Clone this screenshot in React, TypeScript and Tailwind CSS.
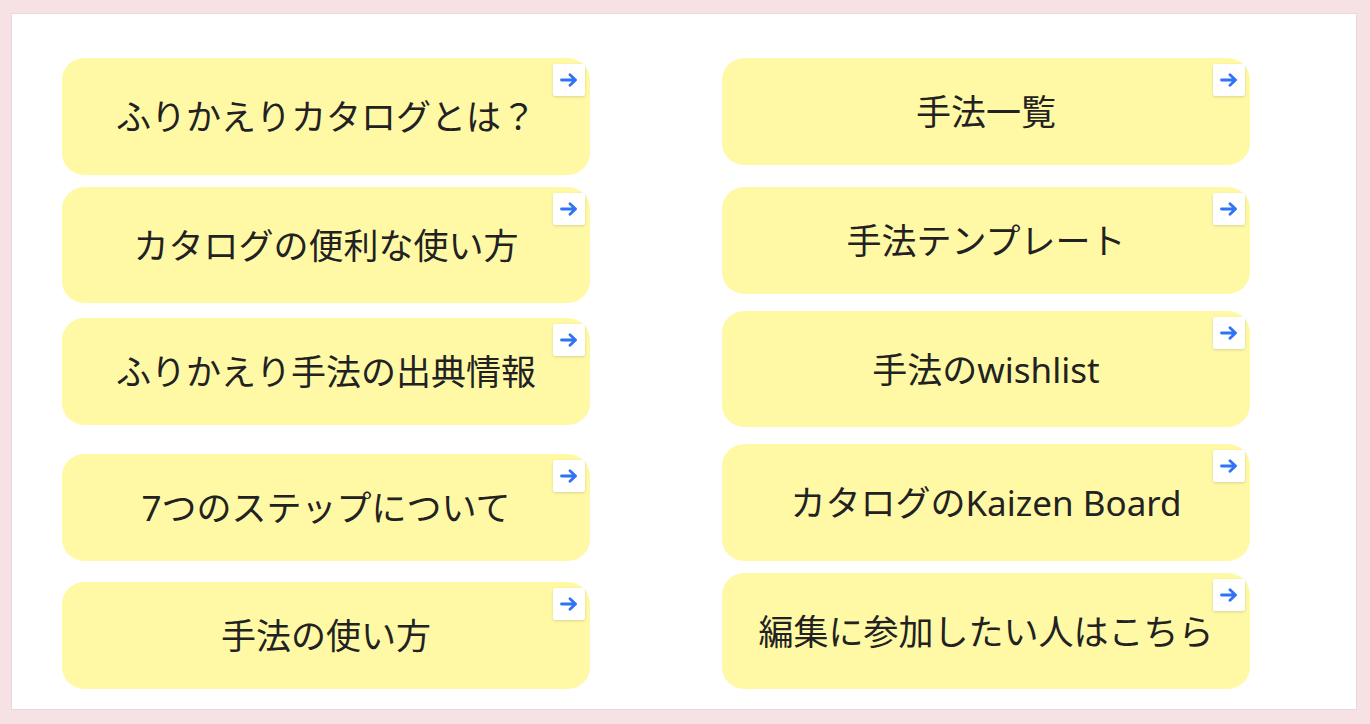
const leftCards = [
  { title: 'ふりかえりカタログとは？', h: 'h-[117px]', mt: 'mt-0' },
  { title: 'カタログの便利な使い方', h: 'h-[116px]', mt: 'mt-[12px]' },
  { title: 'ふりかえり手法の出典情報', h: 'h-[107px]', mt: 'mt-[15px]' },
  { title: '7つのステップについて', h: 'h-[107px]', mt: 'mt-[29px]' },
  { title: '手法の使い方', h: 'h-[107px]', mt: 'mt-[21px]' },
];

const rightCards = [
  { title: '手法一覧', h: 'h-[107px]', mt: 'mt-0' },
  { title: '手法テンプレート', h: 'h-[107px]', mt: 'mt-[22px]' },
  { title: '手法のwishlist', h: 'h-[116px]', mt: 'mt-[17px]' },
  { title: 'カタログのKaizen Board', h: 'h-[117px]', mt: 'mt-[17px]' },
  { title: '編集に参加したい人はこちら', h: 'h-[116px]', mt: 'mt-[12px]' },
];

type Card = { title: string; h: string; mt: string };

const LinkBadge = () => (
  <div className="absolute top-[6px] right-[5px] w-[32px] h-[32px] bg-white rounded-[2px] shadow-[0_1px_3px_rgba(0,0,0,0.15)] flex items-center justify-center">
    <svg width="18" height="14" viewBox="0 0 18 14" fill="none">
      <path d="M1.5 7H15.5M10 1.8L15.5 7L10 12.2" stroke="#2f73f6" strokeWidth="2.8" strokeLinecap="round" strokeLinejoin="round" />
    </svg>
  </div>
);

const Sticky = ({ card }: { card: Card }) => (
  <div className={`relative w-[528px] ${card.h} ${card.mt} bg-[#fff9a6] rounded-[22px] flex items-center justify-center`}>
    <span className="text-[35px] leading-none text-[#222222]">{card.title}</span>
    <LinkBadge />
  </div>
);

export default function App() {
  return (
    <div
      className="w-[1370px] h-[724px] bg-[#f6e2e5] pt-[13px] pl-[11px] pr-[13px] pb-[14px]"
      style={{ fontFamily: '"Noto Sans", "Noto Sans CJK JP", sans-serif' }}
    >
      <div className="w-full h-full bg-white border border-[#ead9dc] pt-[44px] pl-[50px] flex gap-[132px]">
        <div className="flex flex-col">
          {leftCards.map(c => (
            <Sticky key={c.title} card={c} />
          ))}
        </div>
        <div className="flex flex-col">
          {rightCards.map(c => (
            <Sticky key={c.title} card={c} />
          ))}
        </div>
      </div>
    </div>
  );
}
